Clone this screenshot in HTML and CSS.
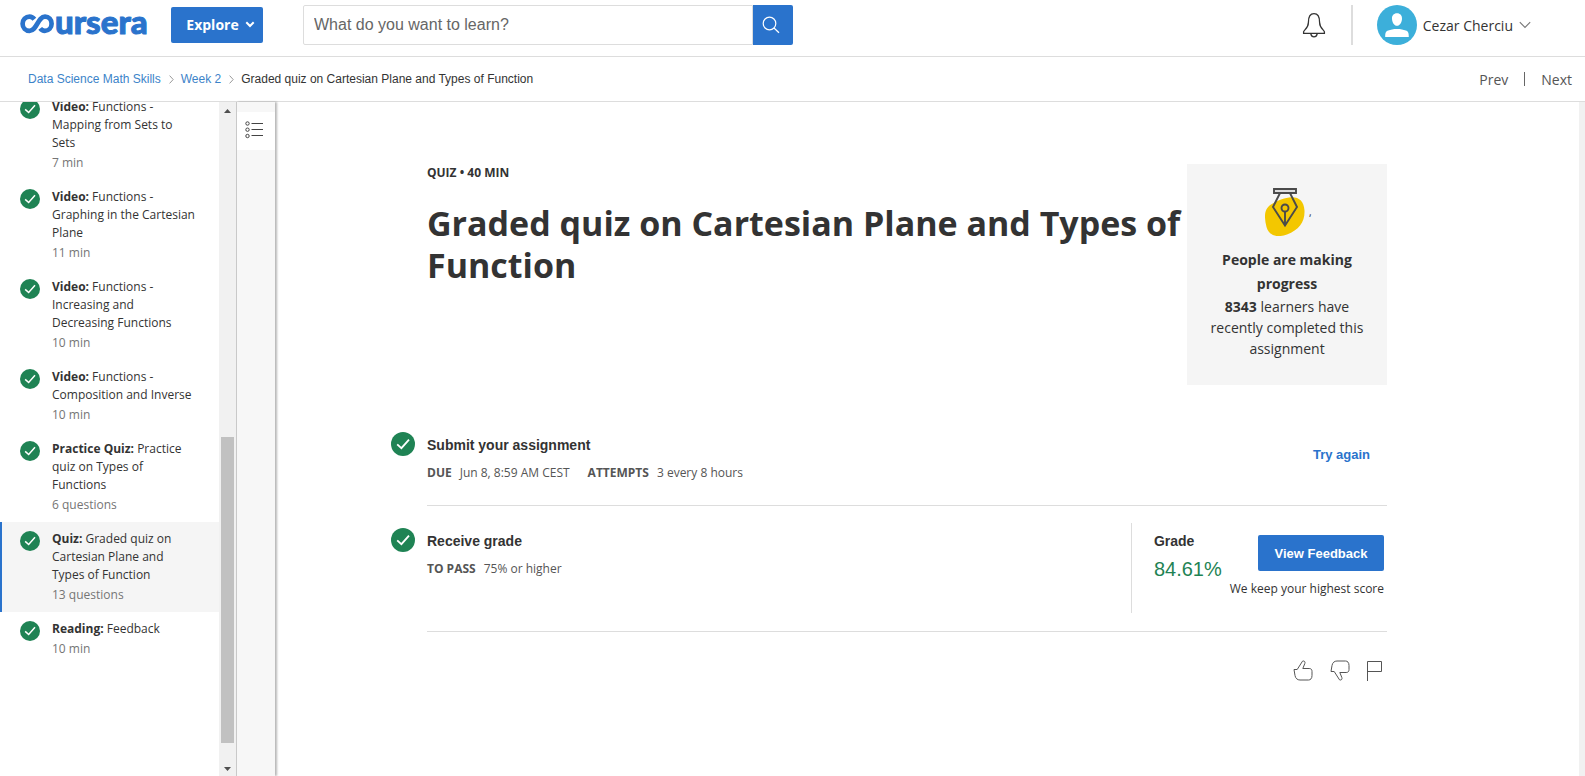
FILE: index.html
```html
<!DOCTYPE html>
<html lang="en">
<head>
<meta charset="utf-8">
<title>Graded quiz on Cartesian Plane and Types of Function | Coursera</title>
<meta name="viewport" content="width=device-width, initial-scale=1">
<link rel="stylesheet" href="styles.css">
</head>
<body>
<svg class="defs" aria-hidden="true">
  <symbol id="check" viewBox="0 0 24 24">
    <circle cx="12" cy="12" r="12" fill="#1f8354"/>
    <path d="M6.2 12.4l4.2 3.8 7.6-8.6" fill="none" stroke="#fff" stroke-width="1.8"/>
  </symbol>
</svg>

<header class="top">
  <a class="logo" href="#" aria-label="Coursera">
    <svg class="logo-mark" viewBox="0 0 34 20" aria-hidden="true"><path d="M14.400 5.200C13 3.400 11.600 2.600 9.600 2.600 5.600 2.600 2.600 5.800 2.600 9.700c0 4 3 7.100 7 7.100 7.200 0 8.200-14.200 15.400-14.200 3.800 0 6.600 3.200 6.600 7.100s-2.800 7.100-6.800 7.100c-2 0-3.400-.8-4.600-2.400" fill="none" stroke="#2a73cc" stroke-width="4.700"/></svg>
    <span class="logo-text">ursera</span>
  </a>
  <button class="explore" type="button">Explore
    <svg width="10" height="7" viewBox="0 0 10 7" aria-hidden="true"><path d="M1.300 1.300L5 5l3.700-3.700" fill="none" stroke="#fff" stroke-width="2"/></svg>
  </button>
  <form class="search" role="search">
    <input class="search-box" type="text" aria-label="Search" placeholder="What do you want to learn?">
    <button class="search-btn" type="button" aria-label="Search">
      <svg width="18" height="18" viewBox="0 0 18 18" fill="none" stroke="#fff" stroke-width="1.200" aria-hidden="true"><circle cx="7.500" cy="7.500" r="6.300"/><path d="M12 12l5 4.800"/></svg>
    </button>
  </form>
  <div class="account">
    <button class="bell" type="button" aria-label="Notifications">
      <svg width="24" height="26" viewBox="0 0 24 26" fill="none" stroke="#333" stroke-width="1.300" aria-hidden="true"><path d="M1.600 21.400v-1.600c0-1.600 4.800-3.600 4.800-9.400C6.400 4.600 8 1.700 12 1.700s5.600 2.900 5.600 8.700c0 5.800 4.800 7.800 4.800 9.400v1.600zM8.800 21.800c.4 2 1.600 3 3.200 3s2.800-1 3.200-3"/></svg>
    </button>
    <button class="user" type="button">
      <svg class="avatar" viewBox="0 0 40 40" aria-hidden="true"><circle cx="20" cy="20" r="20" fill="#3cafda"/><path d="M20 8.300c3.300 0 5.200 2.300 5 5.600-.2 3.400-2.200 6.800-5 6.800s-4.800-3.400-5-6.800c-.2-3.300 1.700-5.600 5-5.600zM8.200 32c0-4 .6-5.500 3-6.400 2.400-1 5-1.600 8.800-1.600s6.400.6 8.800 1.600c2.400.9 3 2.400 3 6.400z" fill="#fff"/></svg>
      <span>Cezar Cherciu</span>
      <svg width="12" height="8" viewBox="0 0 12 8" aria-hidden="true"><path d="M.8 1.200L6 6.400l5.200-5.200" fill="none" stroke="#777" stroke-width="1.100"/></svg>
    </button>
  </div>
</header>

<nav class="crumbs" aria-label="Breadcrumb">
  <a href="#">Data Science Math Skills</a>
  <svg class="sep" viewBox="0 0 5 9" aria-hidden="true"><path d="M.6.6l3.600 3.900L.6 8.400" fill="none" stroke="#999"/></svg>
  <a href="#">Week 2</a>
  <svg class="sep" viewBox="0 0 5 9" aria-hidden="true"><path d="M.6.6l3.600 3.900L.6 8.400" fill="none" stroke="#999"/></svg>
  <span>Graded quiz on Cartesian Plane and Types of Function</span>
  <div class="pager"><a href="#">Prev</a><i class="bar"></i><a href="#">Next</a></div>
</nav>

<div class="body">
  <aside class="side">
    <ul class="items">
      <li class="item"><svg class="tick"><use href="#check"/></svg><a href="#"><b>Video:</b> Functions - Mapping from Sets to Sets<small>7 min</small></a></li>
      <li class="item"><svg class="tick"><use href="#check"/></svg><a href="#"><b>Video:</b> Functions - Graphing in the Cartesian Plane<small>11 min</small></a></li>
      <li class="item"><svg class="tick"><use href="#check"/></svg><a href="#"><b>Video:</b> Functions - Increasing and Decreasing Functions<small>10 min</small></a></li>
      <li class="item"><svg class="tick"><use href="#check"/></svg><a href="#"><b>Video:</b> Functions - Composition and Inverse<small>10 min</small></a></li>
      <li class="item"><svg class="tick"><use href="#check"/></svg><a href="#"><b>Practice Quiz:</b> Practice quiz on Types of Functions<small>6 questions</small></a></li>
      <li class="item current"><svg class="tick"><use href="#check"/></svg><a href="#"><b>Quiz:</b> Graded quiz on Cartesian Plane and Types of Function<small>13 questions</small></a></li>
      <li class="item"><svg class="tick"><use href="#check"/></svg><a href="#"><b>Reading:</b> Feedback<small>10 min</small></a></li>
    </ul>
  </aside>
  <div class="scroll" aria-hidden="true">
    <svg width="7" height="4" viewBox="0 0 7 4"><path d="M0 4l3.500-4L7 4z" fill="#505050"/></svg>
    <div class="track"><div class="thumb"></div></div>
    <svg width="7" height="4" viewBox="0 0 7 4"><path d="M0 0l3.500 4L7 0z" fill="#505050"/></svg>
  </div>
  <div class="strip">
    <button class="outline" type="button" aria-label="Course outline">
      <svg width="18" height="18" viewBox="0 0 18 18" fill="none" stroke="#444" aria-hidden="true"><circle cx="2.500" cy="2.500" r="1.700"/><circle cx="2.500" cy="8.700" r="1.700"/><circle cx="2.500" cy="15" r="1.700"/><path d="M6.500 2.500H18M6.500 8.500H18M6.500 14.500H18"/></svg>
    </button>
  </div>

  <main class="main">
    <section class="intro">
      <div class="intro-text">
        <p class="kind">QUIZ • 40 MIN</p>
        <h1>Graded quiz on Cartesian Plane and Types of Function</h1>
      </div>
      <div class="card">
        <div class="card-icon">
          <svg width="40" height="48" viewBox="0 0 40 48" aria-hidden="true"><path d="M24 9.500c9-1.500 15 3 15.500 13C40 34 34 42 22 46.500 12 50 4 48 1.500 39-1 29-1 21 6 16.500 12 13 17 10.500 24 9.500z" fill="#f3c700"/><g fill="none" stroke="#4a4a4a" stroke-width="1.900"><path d="M9 1h22v4H9z" fill="#ddd"/><path d="M14.800 5.500L8 19l12 18.500L32 19 25.200 5.500"/><circle cx="20" cy="20" r="3.500"/><path d="M20 23.500V37"/></g></svg>
          <span>,</span>
        </div>
        <h2>People are making progress</h2>
        <p><b>8343</b> learners have recently completed this assignment</p>
      </div>
    </section>

    <section class="step">
      <svg class="big-tick"><use href="#check"/></svg>
      <div class="step-body">
        <div class="step-text">
          <h3>Submit your assignment</h3>
          <dl><dt>DUE</dt><dd>Jun 8, 8:59 AM CEST</dd><dt>ATTEMPTS</dt><dd>3 every 8 hours</dd></dl>
        </div>
        <button class="again" type="button">Try again</button>
      </div>
    </section>

    <section class="step graded">
      <svg class="big-tick"><use href="#check"/></svg>
      <div class="step-body">
        <div class="step-text">
          <h3>Receive grade</h3>
          <dl><dt>TO PASS</dt><dd>75% or higher</dd></dl>
        </div>
        <div class="result">
          <div class="grade"><h3>Grade</h3><p>84.61%</p></div>
          <div class="feedback"><button type="button">View Feedback</button><p>We keep your highest score</p></div>
        </div>
      </div>
    </section>

    <div class="votes">
      <button type="button" aria-label="Like"><svg width="20" height="21" viewBox="0 0 20 21"><path d="M1 9.500h3.200L9.500 1.200c1.800-.8 3 .6 2.300 2.400L9.800 8.500h6.400c2 0 2.800 1.200 2.800 3v4c0 3-1.500 4.500-3.500 4.500H7c-2.500 0-4.500-1.500-5-4.500z"/></svg></button>
      <button type="button" aria-label="Dislike"><svg width="20" height="21" viewBox="0 0 20 21"><path d="M1 11.500h3.200l5.300 8.300c1.800.8 3-.6 2.300-2.400l-2-4.900h6.400c2 0 2.800-1.200 2.800-3v-4C19 2.500 17.500 1 15.500 1H7C4.500 1 2.500 2.500 2 5.500z"/></svg></button>
      <button type="button" aria-label="Report"><svg width="16" height="21" viewBox="0 0 16 21"><path d="M.5 21V1.500h14v10H.5"/></svg></button>
    </div>
  </main>
  <div class="page-scroll" aria-hidden="true"></div>
</div>
</body>
</html>
```

FILE: styles.css
```css
* { box-sizing: border-box; margin: 0; padding: 0; }
body {
  display: flex;
  flex-direction: column;
  height: 100vh;
  overflow: hidden;
  background: #fff;
  color: #333;
  font: 14px/21px "Open Sans", sans-serif;
}
button { border: 0; background: none; font: inherit; color: inherit; cursor: pointer; }
a { color: inherit; text-decoration: none; }
svg { display: block; flex: none; }
.defs { position: absolute; width: 0; height: 0; }

.top {
  display: flex;
  flex: none;
  align-items: flex-start;
  height: 57px;
  padding: 5px 54px 0 20px;
  border-bottom: 1px solid #ddd;
}
.logo { display: flex; align-items: center; width: 127px; margin-right: 24px; height: 37px; color: #2a73cc; }
.logo-mark { width: 34px; height: 20px; }
.logo-text { padding: 0 0 6px 1px; font: 900 33px/28px Lato, sans-serif; -webkit-text-stroke: 1px #2a73cc; }
.explore {
  display: flex;
  align-items: center;
  justify-content: center;
  gap: 6px;
  width: 92px;
  height: 36px;
  margin: 2px 40px 0 0;
  padding: 0 0 2px 7px;
  border-radius: 2px;
  background: #2a73cc;
  color: #fff;
  font-weight: 700;
}
.search { display: flex; width: 490px; height: 40px; }
.search-box {
  flex: 1;
  min-width: 0;
  padding: 0 10px;
  border: 1px solid #ddd;
  border-radius: 2px 0 0 2px;
  font: 16px "Liberation Sans", sans-serif;
}
.search-box::placeholder { color: #666; opacity: 1; }
.search-btn { display: grid; place-items: center; width: 40px; padding-right: 4px; border-radius: 0 2px 2px 0; background: #2a73cc; }
.account { display: flex; margin-left: auto; height: 40px; }
.bell { display: flex; align-items: center; padding: 0 25px 0 0; border-right: 2px solid #ddd; }
.user { display: flex; align-items: center; gap: 6px; margin-left: 24px; }
.avatar { width: 40px; height: 40px; }

.crumbs {
  display: flex;
  flex: none;
  align-items: center;
  height: 45px;
  padding: 0 13px 0 28px;
  border-bottom: 1px solid #ddd;
  font: 12px/18px "Liberation Sans", sans-serif;
}
.crumbs > a { color: #3c83c9; }
.sep { width: 5px; height: 9px; margin: 0 7px 0 8px; }
.pager { display: flex; align-items: center; gap: 16px; margin-left: auto; font: 14px/21px "Open Sans", sans-serif; color: #555; }
.bar { width: 1px; height: 14px; background: #666; }

.body { display: flex; flex: 1; min-height: 0; }
.side { width: 219px; overflow: hidden; flex: none; }
.items { list-style: none; margin-top: -12px; }
.item { display: flex; padding: 8px 22px 8px 20px; font-size: 12px; line-height: 18px; }
.item a { flex: 1; }
.item small { display: block; margin-top: 2px; font-size: 12px; color: #757575; }
.tick { width: 20px; height: 20px; margin: 1px 12px 0 0; }
.current { background: #f5f5f5; box-shadow: inset 2px 0 #2a73cc; }
.scroll { display: flex; flex-direction: column; align-items: center; justify-content: space-between; flex: none; width: 17px; padding: 7px 0 5px; background: #f1f1f1; }
.track { display: flex; flex-direction: column; justify-content: flex-end; flex: 1; padding: 6px 0 24px; }
.thumb { width: 13px; height: 49%; background: #c1c1c1; }
.strip {
  flex: none;
  width: 39px;
  padding-top: 10px;
  border-left: 1px solid #c9c9c9;
  background: #f7f7f7;
  box-shadow: 2px 0 2px rgba(0, 0, 0, .28);
}
.outline { display: grid; place-items: center; width: 100%; height: 38px; padding: 0 4px 2px 0; background: #fff; }

.main { flex: 1; min-width: 0; padding: 62px 192px 0 152px; }
.page-scroll { width: 6px; background: #f1f1f1; }
.intro { display: flex; align-items: flex-start; }
.intro-text { flex: 1; }
.kind { font-size: 12px; line-height: 18px; font-weight: 700; }
h1 { margin-top: 20px; font-size: 34px; line-height: 42px; font-weight: 700; }
.card { width: 200px; padding: 24px 20px 26px; background: #f5f5f5; text-align: center; }
.card-icon { display: flex; align-items: center; width: 48px; height: 48px; margin: 0 auto 12px 58px; font-size: 10px; gap: 4px; }
.card h2 { font-size: 14px; line-height: 24px; }

.step { display: flex; margin: 34px 0 0 -36px; }
.big-tick { width: 24px; height: 24px; margin: 13px 12px 0 0; }
.step-body { display: flex; flex: 1; justify-content: space-between; height: 87px; border-bottom: 1px solid #ddd; }
.step-text { padding-top: 16px; }
h3 { font: 700 14px/21px "Liberation Sans", sans-serif; }
dl { display: flex; margin-top: 8px; font-size: 12px; line-height: 18px; color: #555; }
dt { font-weight: 700; margin-right: 8px; }
dd { margin-right: 18px; }
.again { align-self: center; margin: 0 17px 16px 0; font: 700 13px/21px "Liberation Sans", sans-serif; color: #2a73cc; }
.graded { margin-top: 9px; }
.graded .step-body { height: 117px; }
.result { display: flex; height: 90px; margin: 8px 3px 0 0; padding-left: 22px; border-left: 1px solid #ddd; }
.grade { padding-top: 8px; }
.grade p { margin-top: 5px; font: 20px/24px "Liberation Sans", sans-serif; color: #1f8354; }
.feedback { display: flex; flex-direction: column; align-items: flex-end; padding: 12px 0 0 8px; }
.feedback button { width: 126px; height: 36px; border-radius: 2px; background: #2a73cc; color: #fff; font: 700 13px/21px "Liberation Sans", sans-serif; }
.feedback p { margin-top: 9px; font-size: 12px; line-height: 18px; }
.votes { display: flex; justify-content: flex-end; gap: 17px; padding: 28px 4px 0 0; }
.votes svg { fill: none; stroke: #555; stroke-width: 1; }
```
